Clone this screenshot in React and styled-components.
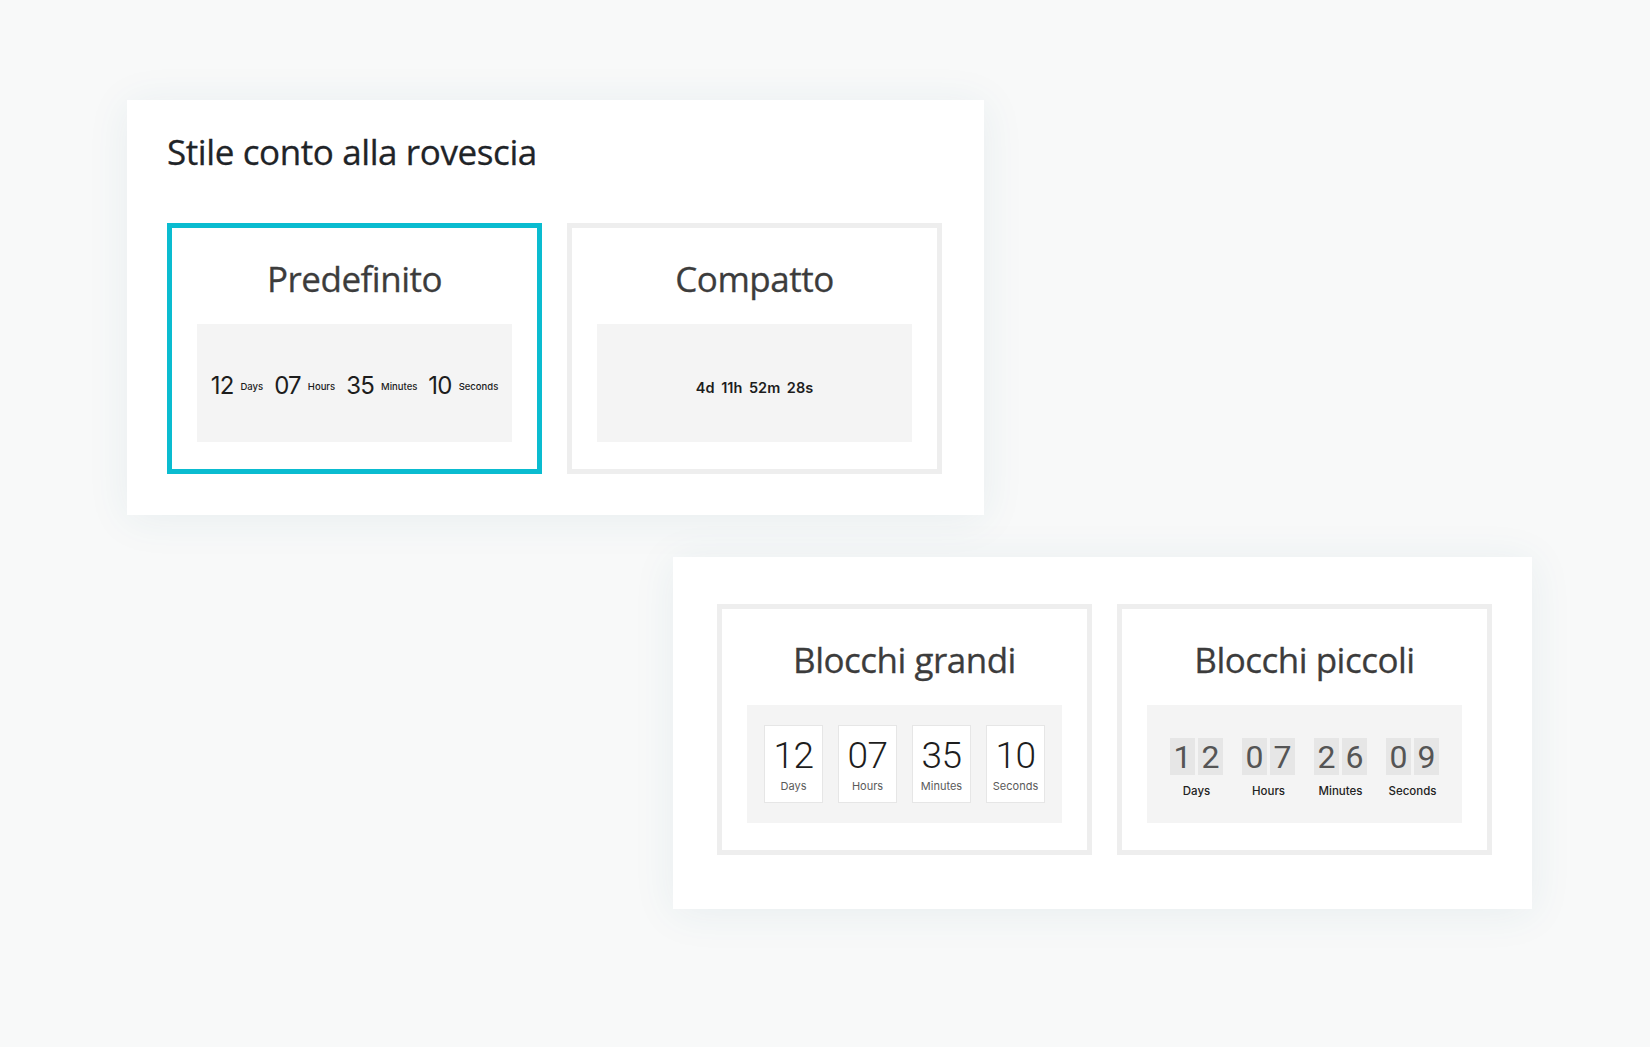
import React from "react";
import styled, { createGlobalStyle } from "styled-components";

const Global = createGlobalStyle`
  html, body { margin: 0; padding: 0; background: #f8f9f9; }
  body { font-family: "Open Sans", "Noto Sans", sans-serif; }
  * { box-sizing: border-box; }
`;

const Page = styled.div`
  min-height: 1047px;
  display: flex;
  flex-direction: column;
  align-items: flex-start;
  padding-top: 100px;
  gap: 42px;
`;

const Panel = styled.section`
  background: #fff;
  width: ${(p) => p.$w}px;
  margin-left: ${(p) => p.$left}px;
  padding: ${(p) => p.$pad};
  box-shadow: 0 4px 40px rgba(40, 100, 130, 0.08);
`;

const Title = styled.h2`
  margin: 0 0 54px;
  font-family: "Open Sans", sans-serif;
  font-weight: 400;
  font-size: 35px;
  line-height: 1;
  color: #1f2428;
  letter-spacing: -0.4px;
  -webkit-text-stroke: 0.3px #1f2428;
`;

const CardRow = styled.div`
  display: grid;
  grid-template-columns: 375px 375px;
  gap: 25px;
`;

const Card = styled.div`
  height: 251px;
  border: 5px solid ${(p) => (p.$active ? "#0abcd0" : "#eeeeee")};
  background: #fff;
  padding: 33px 25px 27px;
  display: flex;
  flex-direction: column;
`;

const CardTitle = styled.h3`
  margin: 0 0 28px;
  text-align: center;
  font-family: "Open Sans", sans-serif;
  font-weight: 400;
  font-size: 35px;
  line-height: 1;
  letter-spacing: -0.5px;
  color: #3c3c3c;
  -webkit-text-stroke: 0.3px #3c3c3c;
`;

const Preview = styled.div`
  flex: 1;
  background: #f4f4f4;
  display: flex;
  align-items: center;
  justify-content: center;
`;

/* Default style */
const InlineRow = styled.div`
  display: flex;
  align-items: center;
  font-family: "Inter", sans-serif;
  color: #1d1d1d;
  margin-top: 4px;
`;
const InlineNum = styled.span`
  font-size: 24px;
  font-weight: 400;
  letter-spacing: -0.8px;
  margin-right: 7px;
`;
const InlineLabel = styled.span`
  font-size: 9.5px;
  font-weight: 500;
  margin-right: 11px;
  margin-top: 2px;
  &:last-child { margin-right: 0; }
`;

/* Compact */
const CompactText = styled.div`
  font-family: "Inter", sans-serif;
  font-size: 14.5px;
  font-weight: 600;
  color: #1d1d1d;
  word-spacing: 3px;
  margin-top: 8px;
`;

/* Big blocks */
const BlockRow = styled.div`
  display: flex;
  gap: 15px;
  margin-top: -1px;
`;
const Block = styled.div`
  width: 59px;
  height: 78px;
  background: #fff;
  border: 1px solid #e6e6e6;
  display: flex;
  flex-direction: column;
  align-items: center;
  padding-top: 11px;
`;
const BlockNum = styled.div`
  font-family: "Roboto", sans-serif;
  font-size: 37px;
  font-weight: 300;
  line-height: 1;
  letter-spacing: -0.5px;
  color: #1d1d1d;
`;
const BlockLabel = styled.div`
  margin-top: 7px;
  font-family: "Inter", sans-serif;
  font-size: 11px;
  font-weight: 400;
  line-height: 1;
  color: #5a5a5a;
`;

/* Small blocks */
const FlipRow = styled.div`
  display: flex;
  gap: 19px;
  margin-top: 8px;
`;
const FlipGroup = styled.div`
  display: flex;
  flex-direction: column;
  align-items: center;
  font-family: "Inter", sans-serif;
`;
const Tiles = styled.div`
  display: flex;
  gap: 3px;
`;
const Tile = styled.span`
  width: 25px;
  height: 37px;
  background: #e6e6e6;
  color: #555;
  font-family: "Roboto", sans-serif;
  font-size: 32px;
  font-weight: 400;
  display: flex;
  align-items: center;
  justify-content: center;
`;
const FlipLabel = styled.div`
  margin-top: 11px;
  font-size: 11.5px;
  font-weight: 500;
  line-height: 1;
  color: #222;
`;

const units = ["Days", "Hours", "Minutes", "Seconds"];

export default function App() {
  const def = ["12", "07", "35", "10"];
  const small = ["12", "07", "26", "09"];
  return (
    <>
      <Global />
      <Page>
        <Panel $w={857} $left={127} $pad="34px 42px 41px 40px">
          <Title>Stile conto alla rovescia</Title>
          <CardRow>
            <Card $active>
              <CardTitle>Predefinito</CardTitle>
              <Preview>
                <InlineRow>
                  {def.map((n, i) => (
                    <React.Fragment key={i}>
                      <InlineNum>{n}</InlineNum>
                      <InlineLabel>{units[i]}</InlineLabel>
                    </React.Fragment>
                  ))}
                </InlineRow>
              </Preview>
            </Card>
            <Card>
              <CardTitle>Compatto</CardTitle>
              <Preview>
                <CompactText>4d 11h 52m 28s</CompactText>
              </Preview>
            </Card>
          </CardRow>
        </Panel>
        <Panel $w={859} $left={673} $pad="47px 40px 54px 44px">
          <CardRow>
            <Card>
              <CardTitle>Blocchi grandi</CardTitle>
              <Preview>
                <BlockRow>
                  {def.map((n, i) => (
                    <Block key={i}>
                      <BlockNum>{n}</BlockNum>
                      <BlockLabel>{units[i]}</BlockLabel>
                    </Block>
                  ))}
                </BlockRow>
              </Preview>
            </Card>
            <Card>
              <CardTitle>Blocchi piccoli</CardTitle>
              <Preview>
                <FlipRow>
                  {small.map((n, i) => (
                    <FlipGroup key={i}>
                      <Tiles>
                        {n.split("").map((d, j) => (
                          <Tile key={j}>{d}</Tile>
                        ))}
                      </Tiles>
                      <FlipLabel>{units[i]}</FlipLabel>
                    </FlipGroup>
                  ))}
                </FlipRow>
              </Preview>
            </Card>
          </CardRow>
        </Panel>
      </Page>
    </>
  );
}
